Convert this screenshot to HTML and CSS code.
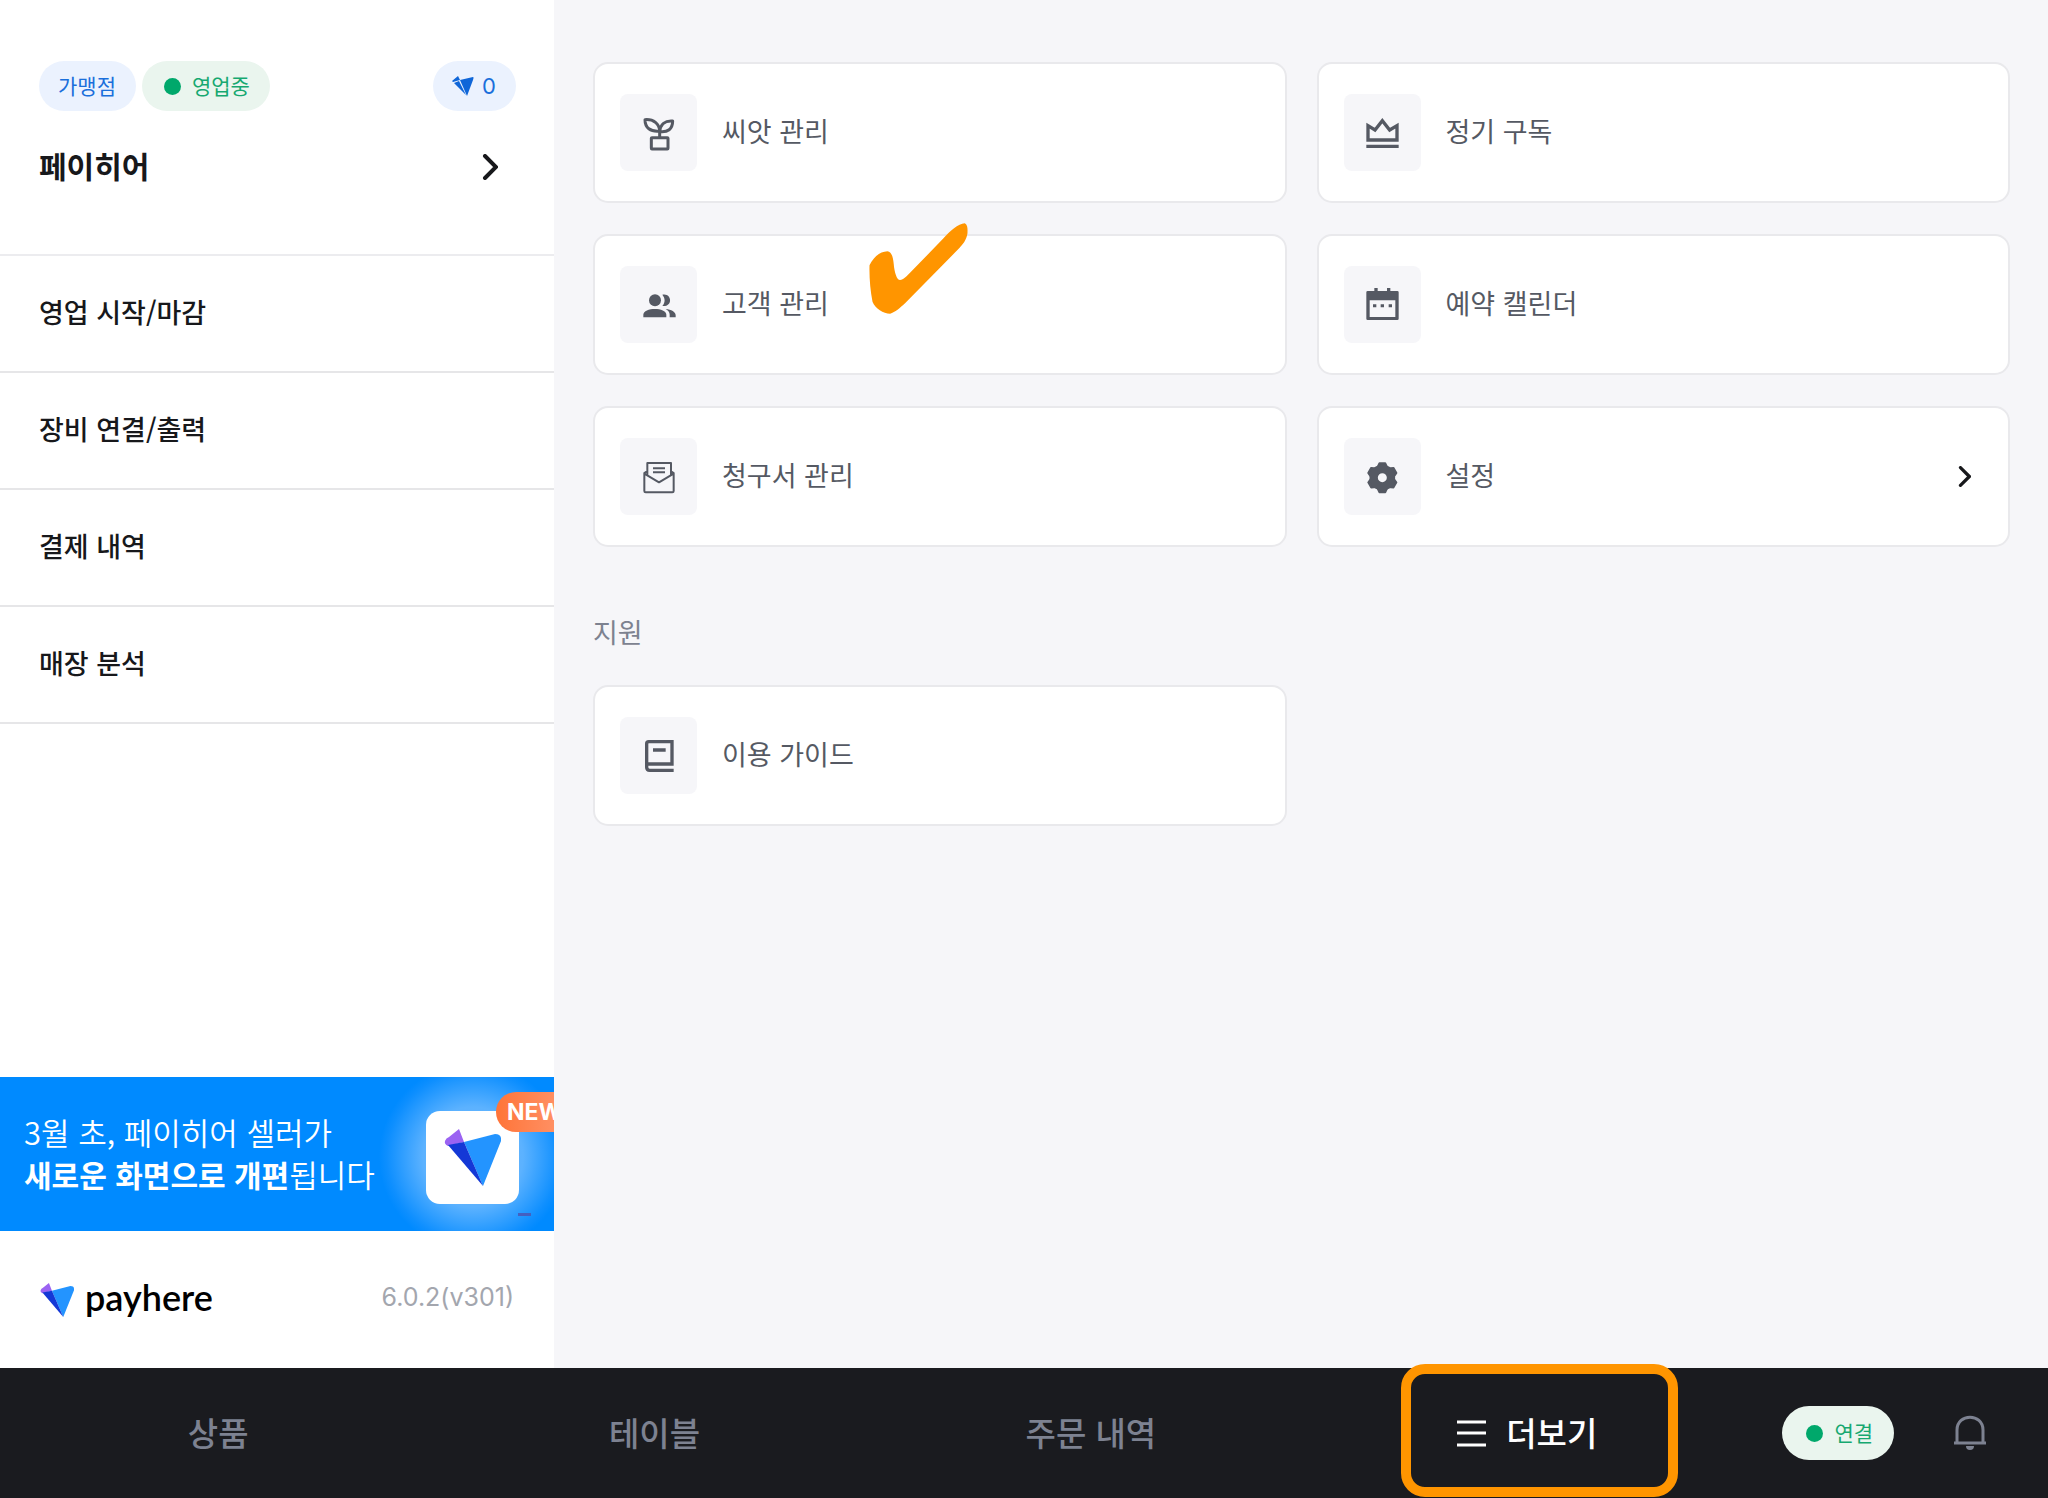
FILE: index.html
```html
<!DOCTYPE html>
<html lang="ko">
<head>
<meta charset="utf-8">
<meta name="viewport" content="width=device-width, initial-scale=1">
<title>페이히어 셀러</title>
<link rel="stylesheet" href="styles.css">
</head>
<body>
<svg class="defs" aria-hidden="true">
  <symbol id="logo" viewBox="0 0 57 57">
    <path fill="#9b63f2" d="M1 12 Q2 9 5 8 L15 0 L20 13 L4 17 Q0 15 1 12Z"/>
    <path fill="#2394ff" d="M20 13 L51 5 Q58 5 57 12 L39 57Z"/>
    <path fill="#1438d6" d="M4 16 L20 13 L39 57Z"/>
  </symbol>
  <symbol id="chevron" viewBox="0 0 16 26">
    <path fill="none" stroke="#17181b" stroke-width="4" stroke-linecap="round" d="M3 2 L14 13 L3 24"/>
  </symbol>
</svg>

<div class="app">
  <div class="body">
    <aside class="sidebar">
      <header class="store">
        <div class="pills">
          <span class="pill pill-blue"><span class="label">가맹점</span></span>
          <span class="pill pill-green"><i class="dot"></i><span class="label">영업중</span></span>
          <span class="pill pill-blue pill-points">
            <svg width="22" height="20" viewBox="0 0 22 20" aria-hidden="true"><path fill="#0f66d8" d="M0 5 L6 0 L8 4 L1 6Z M8 4 L21 1 Q22 1 21 4 L15 20Z M2 7 L7 5 L14 19Z"/></svg>
            <span class="latin">0</span>
          </span>
        </div>
        <a class="store-link" href="#"><span class="label">페이히어</span><svg width="16" height="26" aria-hidden="true"><use href="#chevron"/></svg></a>
      </header>
      <nav class="menu">
        <a href="#"><span class="label">영업 시작/마감</span></a>
        <a href="#"><span class="label">장비 연결/출력</span></a>
        <a href="#"><span class="label">결제 내역</span></a>
        <a href="#"><span class="label">매장 분석</span></a>
      </nav>
      <a class="banner" href="#">
        <span class="banner-text label">3월 초, 페이히어 셀러가<br><b>새로운 화면으로 개편</b>됩니다</span>
        <span class="banner-app"><svg width="57" height="57" aria-hidden="true"><use href="#logo"/></svg></span>
        <span class="banner-new latin">NEW</span>
        <i class="banner-dash"></i>
      </a>
      <footer class="brand">
        <svg width="34" height="34" aria-hidden="true"><use href="#logo"/></svg>
        <span class="brand-name">payhere</span>
        <span class="version latin">6.0.2(v301)</span>
      </footer>
    </aside>

    <main class="main">
      <div class="cards">
        <a class="card" href="#">
          <span class="tile"><svg viewBox="-60 -60 120 120" aria-hidden="true"><g fill="none" stroke="currentColor" stroke-width="9" stroke-linejoin="round"><path d="M-42 -40 C-16 -42 1 -28 2 -6 C-26 -3 -42 -16 -42 -40Z M41 -36 C18 -38 4 -26 2 -4 C26 -1 41 -12 41 -36Z M2 -6 V12"/><rect x="-23" y="14" width="50" height="34" rx="2"/></g></svg></span>
          <span class="label">씨앗 관리</span>
        </a>
        <a class="card" href="#">
          <span class="tile"><svg viewBox="-60 -60 120 120" aria-hidden="true"><path fill="none" stroke="currentColor" stroke-width="10" d="M-42 -22 L-21 -9 L1 -37 L23 -9 L45 -22 V21 H-42Z M-47 40 H50"/></svg></span>
          <span class="label">정기 구독</span>
        </a>
        <a class="card" href="#">
          <span class="tile"><svg viewBox="-60 -60 120 120" aria-hidden="true"><g fill="currentColor"><circle cx="-12" cy="-14" r="18"/><path d="M-47 37 V29 C-47 6 22 6 22 29 V37Z"/><path d="M10 -31 C38 -38 44 6 10 3 C19 -8 19 -20 10 -31Z"/><path d="M20 12 C37 14 50 20 50 31 V37 H32 V29 C32 22 28 17 20 12Z"/></g></svg></span>
          <span class="label">고객 관리</span>
          <svg class="check" viewBox="867 518 297 274" aria-hidden="true"><path fill="#ff9500" d="M868 645 C880 620 900 604 922 603 C935 604 939 622 941 642 C943 665 950 690 960 690 C970 689 980 678 990 668 L1090 565 C1110 543 1135 520 1155 519 C1165 524 1163 540 1163 549 C1160 570 1148 583 1140 592 L975 760 C960 773 945 788 930 791 C910 791 885 775 877 755 C870 720 867 680 868 645Z"/></svg>
        </a>
        <a class="card" href="#">
          <span class="tile"><svg viewBox="-60 -60 120 120" aria-hidden="true"><g fill="currentColor"><path fill-rule="evenodd" d="M-43 -42 H-23 V-51 H-13 V-42 H15 V-51 H25 V-42 H46 Q50 -42 50 -38 V41 Q50 45 46 45 H-43 Q-47 45 -47 41 V-38 Q-47 -42 -43 -42Z M-37 -14 V36 H40 V-14Z"/><path d="M-27 -2 h10 v9 h-10Z M-4 -2 h10 v9 h-10Z M20 -2 h10 v9 h-10Z"/></g></svg></span>
          <span class="label">예약 캘린더</span>
        </a>
        <a class="card" href="#">
          <span class="tile"><svg viewBox="-60 -60 120 120" aria-hidden="true"><path fill="none" stroke="currentColor" stroke-width="6" stroke-linejoin="round" d="M-35 -18 L-44 -12 V42 Q-44 46 -40 46 H40 Q44 46 44 42 V-12 L35 -18 M-35 -5 V-42 H36 V-5 M-44 -10 L0 16 L44 -10 M-18 -26 H18 M-18 -14 H18"/></svg></span>
          <span class="label">청구서 관리</span>
        </a>
        <a class="card" href="#">
          <span class="tile"><svg viewBox="-60 -60 120 120" aria-hidden="true"><defs><path id="tooth" d="M-9 -44 H9 L16 -29 H-16Z"/></defs><g fill="currentColor" stroke="currentColor" stroke-width="5" stroke-linejoin="round" transform="translate(1 2)"><use href="#tooth"/><use href="#tooth" transform="rotate(60)"/><use href="#tooth" transform="rotate(120)"/><use href="#tooth" transform="rotate(180)"/><use href="#tooth" transform="rotate(240)"/><use href="#tooth" transform="rotate(300)"/><circle r="26" fill="none" stroke-width="25"/></g></svg></span>
          <span class="label">설정</span>
          <svg class="card-chevron" width="13" height="21" aria-hidden="true"><use href="#chevron"/></svg>
        </a>
      </div>
      <h2 class="section-title">지원</h2>
      <div class="cards">
        <a class="card" href="#">
          <span class="tile"><svg viewBox="-60 -60 120 120" aria-hidden="true"><path fill="none" stroke="currentColor" stroke-width="10" d="M39 24 V-43 H-31 Q-37 -43 -37 -37 V34 Q-37 43 -28 43 H44 M-37 24 H44 M-18 -18 H20"/></svg></span>
          <span class="label">이용 가이드</span>
        </a>
      </div>
    </main>
  </div>

  <nav class="tabbar">
    <a class="tab" href="#"><span class="label">상품</span></a>
    <a class="tab" href="#"><span class="label">테이블</span></a>
    <a class="tab" href="#"><span class="label">주문 내역</span></a>
    <a class="tab tab-active" href="#">
      <svg width="29" height="27" viewBox="0 0 29 27" aria-hidden="true"><path stroke="#fff" stroke-width="3" d="M0 2 H29 M0 13 H29 M0 25 H29"/></svg>
      <span class="label">더보기</span>
    </a>
    <div class="status">
      <span class="pill pill-green pill-connect"><i class="dot"></i><span class="label">연결</span></span>
      <button class="bell" type="button" aria-label="알림">
        <svg width="32" height="36" viewBox="0 0 32 36" aria-hidden="true"><path fill="none" stroke="#7d8291" stroke-width="3" d="M3 28 V15 C3 -2 29 -2 29 15 V28 M0 28 H32"/><path fill="#7d8291" d="M12 31 H20 Q20 35 16 35 Q12 35 12 31Z"/></svg>
      </button>
    </div>
  </nav>
</div>
</body>
</html>
```

FILE: styles.css
```css
* { box-sizing: border-box; }

body {
  margin: 0;
  font-family: "Noto Sans CJK KR", "Noto Sans", sans-serif;
  font-size: 27px;
  line-height: 40px;
  color: #17181b;
  background: #f6f6f9;
}

a { color: inherit; text-decoration: none; }
svg { display: block; flex: none; }
.defs { position: absolute; width: 0; height: 0; }
.latin { font-family: Inter, "Noto Sans CJK KR", sans-serif; }
/* Hangul glyphs sit low in their line box */
.label { padding-bottom: 3px; }

.app { display: flex; flex-direction: column; min-height: 100vh; }
.body { display: flex; flex: 1; }

/* Sidebar */
.sidebar {
  display: flex;
  flex-direction: column;
  flex: none;
  width: 554px;
  background: #fff;
}

.store { padding: 61px 38px 66px 39px; border-bottom: 2px solid #ececef; }
.pills { display: flex; gap: 6px; }

.pill {
  display: flex;
  align-items: center;
  height: 50px;
  padding: 0 20px 0 19px;
  border-radius: 27px;
  font-size: 21px;
}
.pill-blue { background: #ebf2fe; color: #1a6fdb; }
.pill-green { gap: 11px; padding-left: 22px; background: #eaf5ee; color: #16a870; }
.pill-points { gap: 8px; margin-left: auto; font-size: 22px; }
.dot { width: 17px; height: 17px; border-radius: 50%; background: #00a86b; }

.store-link {
  display: flex;
  align-items: center;
  justify-content: space-between;
  margin-top: 34px;
  padding-right: 18px;
  font-size: 30px;
  font-weight: 700;
}

.menu a {
  display: flex;
  align-items: center;
  height: 117px;
  padding: 0 39px;
  border-bottom: 2px solid #e6e6e8;
  font-weight: 500;
}

.banner {
  position: relative;
  display: flex;
  align-items: center;
  justify-content: space-between;
  height: 154px;
  margin-top: auto;
  padding: 0 35px 0 24px;
  overflow: hidden;
  background: radial-gradient(circle at right 81px top 80px, #6bb9ff 0, #5cb2ff 50px, #0e8fff 86px, #008aff 94px);
  color: #fff;
}
.banner-text { font-size: 31px; font-weight: 350; line-height: 42px; white-space: nowrap; }
.banner-text b { font-size: 30px; font-weight: 700; }
.banner-app {
  display: grid;
  place-items: center;
  width: 93px;
  height: 93px;
  margin-top: 6px;
  border-radius: 14px;
  background: #fff;
}
.banner-new {
  position: absolute;
  top: 15px;
  left: calc(100% - 58px);
  padding: 0 11px;
  border-radius: 20px;
  background: linear-gradient(90deg, #ff7438, #ff9870);
  font-size: 23px;
  font-weight: 700;
}
.banner-dash {
  position: absolute;
  right: 23px;
  bottom: 15px;
  width: 13px;
  height: 3px;
  background: #4560c0;
}

.brand { display: flex; align-items: center; height: 137px; padding: 0 40px; }
.brand-name {
  margin-left: 11px;
  padding-bottom: 6px;
  font-family: Lato, sans-serif;
  font-size: 36px;
  font-weight: 600;
  color: #000;
}
.version { margin-left: auto; padding-bottom: 6px; font-size: 25px; color: #a3a6ae; }

/* Main */
.main { flex: 1; padding: 62px 38px 62px 39px; }
.cards { display: grid; grid-template-columns: 1fr 1fr; gap: 31px 30px; }
.card {
  position: relative;
  display: flex;
  align-items: center;
  gap: 25px;
  height: 141px;
  padding: 0 37px 0 25px;
  border: 2px solid #e9e9ec;
  border-radius: 15px;
  background: #fff;
  color: #555963;
}
.tile {
  display: grid;
  place-items: center;
  width: 77px;
  height: 77px;
  border-radius: 8px;
  background: #f6f6f9;
}
.tile svg { width: 40px; height: 40px; }
.card-chevron { margin-left: auto; }
.check { position: absolute; left: 274px; top: -13px; width: 99px; height: 91px; }
.section-title { margin: 65px 0 33px; font-size: 27px; font-weight: 400; color: #7d8290; }

/* Tab bar */
.tabbar { display: flex; height: 130px; background: #1a1b1f; }
.tab {
  position: relative;
  display: flex;
  flex: 1;
  align-items: center;
  justify-content: center;
  gap: 20px;
  font-size: 33px;
  font-weight: 500;
  color: #7d8291;
}
.tab-active { color: #fff; }
.tab-active::after {
  content: "";
  position: absolute;
  inset: -4px 67px 1px 92px;
  border: 10px solid #ff9500;
  border-radius: 24px;
}
.status { display: flex; align-items: center; gap: 60px; padding: 0 62px 0 37px; }
.pill-connect { height: 54px; padding: 0 21px 0 24px; }
.bell { padding: 0; border: 0; background: none; cursor: pointer; }
```
